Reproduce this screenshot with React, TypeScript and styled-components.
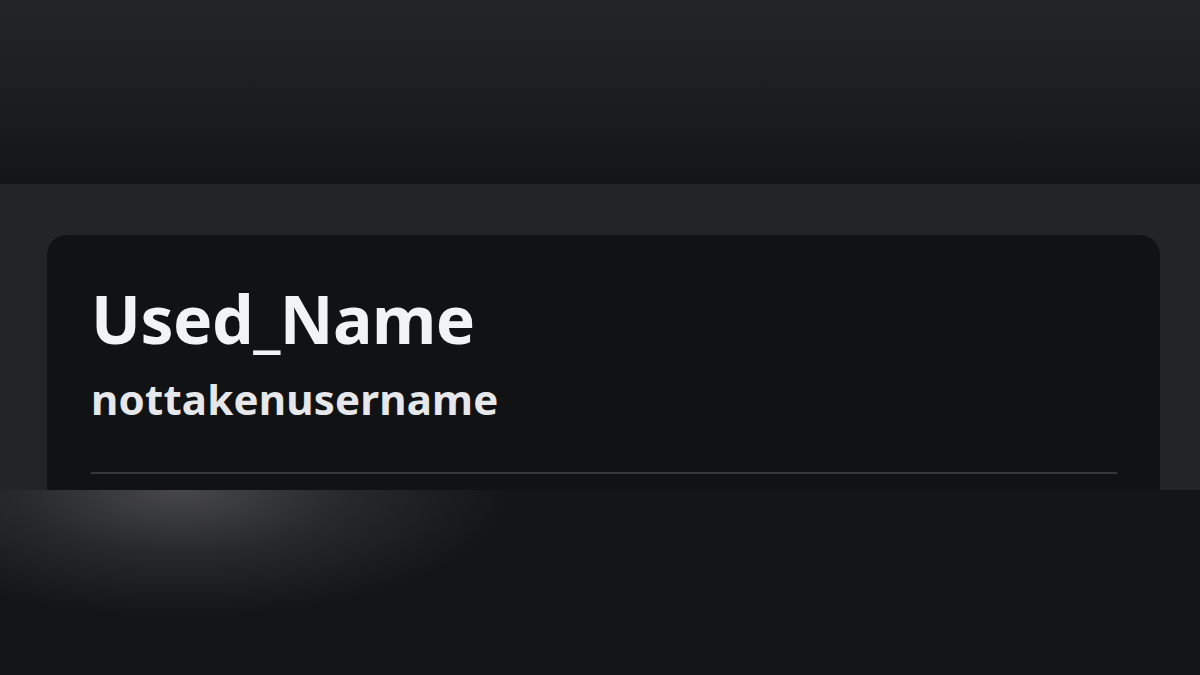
import styled, { createGlobalStyle } from 'styled-components';

const GlobalStyle = createGlobalStyle`
  *, *::before, *::after {
    box-sizing: border-box;
  }
  html, body {
    margin: 0;
    padding: 0;
    background: #141517;
  }
  body {
    font-family: 'Noto Sans', 'Liberation Sans', sans-serif;
    overflow: hidden;
  }
`;

const Page = styled.div`
  width: 1200px;
  height: 675px;
  display: flex;
  flex-direction: column;
  overflow: hidden;
`;

const Banner = styled.div`
  height: 184px;
  flex-shrink: 0;
  background: linear-gradient(180deg, #232428 0%, #1f2024 35%, #141517 100%);
`;

const Section = styled.div`
  height: 306px;
  flex-shrink: 0;
  background: #232428;
  padding: 51px 40px 0 47px;
  overflow: hidden;
`;

const Card = styled.div`
  height: 100%;
  background: #111214;
  border-radius: 20px 20px 0 0;
  padding: 50px 43px 0 44px;
  color: #f2f3f5;
`;

const DisplayName = styled.h1`
  margin: 0;
  font-size: 66px;
  line-height: 1;
  font-weight: 700;
  letter-spacing: -0.5px;
`;

const Username = styled.div`
  margin-top: 27px;
  font-size: 42px;
  line-height: 1;
  font-weight: 700;
  letter-spacing: 0.2px;
  color: #e6e7ea;
`;

const Divider = styled.div`
  margin-top: 52px;
  height: 2px;
  background: #36373c;
`;

const Footer = styled.div`
  flex: 1;
  background:
    radial-gradient(ellipse 330px 125px at 180px 0, rgba(74, 74, 76, 0.95) 0%, rgba(50, 51, 53, 0.65) 50%, rgba(20, 21, 23, 0) 100%),
    #141517;
`;

export default function App() {
  return (
    <>
      <GlobalStyle />
      <Page>
        <Banner />
        <Section>
          <Card>
            <DisplayName>Used_Name</DisplayName>
            <Username>nottakenusername</Username>
            <Divider />
          </Card>
        </Section>
        <Footer />
      </Page>
    </>
  );
}
